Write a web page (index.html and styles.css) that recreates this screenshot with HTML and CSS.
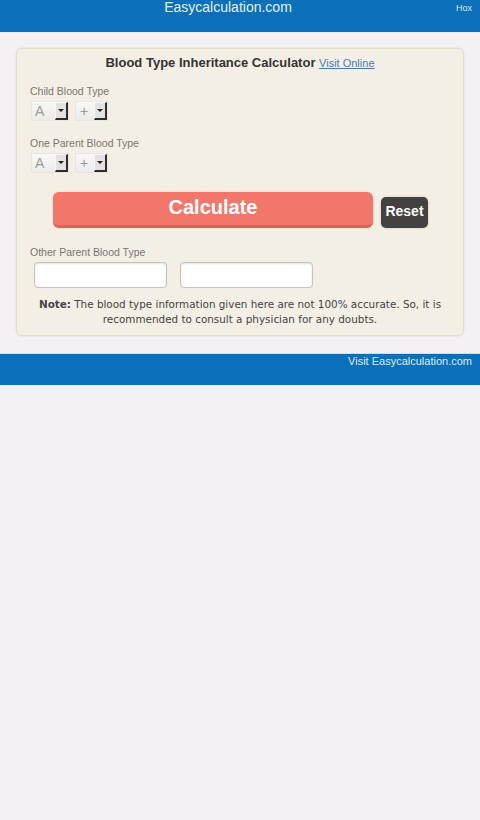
FILE: index.html
```html
<!DOCTYPE html>
<html>
<head>
<meta charset="utf-8">
<link rel="stylesheet" href="styles.css">
</head>
<body>
<header class="topbar">
  <span class="brand">Easycalculation.com</span>
  <span class="hox">Hox</span>
</header>
<main class="wrap">
  <section class="card">
    <h1 class="title">Blood Type Inheritance Calculator <a class="visit" href="#">Visit Online</a></h1>
    <div class="field">
      <div class="label">Child Blood Type</div>
      <div class="selects">
        <div class="sel sel-a"><span class="val">A</span><span class="arrow"><i></i></span></div>
        <div class="sel sel-b"><span class="val">+</span><span class="arrow"><i></i></span></div>
      </div>
    </div>
    <div class="field">
      <div class="label">One Parent Blood Type</div>
      <div class="selects">
        <div class="sel sel-a"><span class="val">A</span><span class="arrow"><i></i></span></div>
        <div class="sel sel-b"><span class="val">+</span><span class="arrow"><i></i></span></div>
      </div>
    </div>
    <div class="buttons">
      <button class="calc">Calculate</button>
      <button class="reset">Reset</button>
    </div>
    <div class="label other">Other Parent Blood Type</div>
    <div class="inputs">
      <input class="txt" type="text">
      <input class="txt" type="text">
    </div>
    <p class="note"><b>Note:</b> The blood type information given here are not 100% accurate. So, it is recommended to consult a physician for any doubts.</p>
  </section>
</main>
<footer class="footbar">
  <a class="footlink" href="#">Visit Easycalculation.com</a>
</footer>
</body>
</html>
```
FILE: styles.css
```css
html, body {
  margin: 0;
  padding: 0;
  background: #f3f1f3;
  font-family: "Liberation Sans", Arial, sans-serif;
}
.topbar {
  height: 32px;
  background: #0b6fba;
  border-bottom: 1px solid #dff0fb;
  position: relative;
  display: flex;
  justify-content: center;
}
.brand {
  color: #e6f2fb;
  font-size: 14px;
  line-height: 15px;
  padding-top: 0;
  margin-left: -24px;
}
.hox {
  position: absolute;
  right: 8px;
  top: 3px;
  color: #d9ecf9;
  font-size: 9px;
}
.wrap {
  padding: 15px 16px 17px 16px;
}
.card {
  background: #f4efe4;
  border: 1px solid #e3dccb;
  border-radius: 6px;
  box-shadow: 0 0 2px rgba(0,0,0,0.12);
  padding: 6px 13px 9px 13px;
  height: 288px;
  box-sizing: border-box;
}
.title {
  margin: 0;
  text-align: center;
  font-size: 13px;
  font-weight: bold;
  color: #333;
  line-height: 16px;
}
.visit {
  font-size: 11px;
  font-weight: normal;
  color: #4a7ab8;
  text-decoration: underline;
}
.field {
  margin-top: 14px;
}
.field + .field {
  margin-top: 16px;
}
.label {
  font-size: 10.5px;
  color: #7a7670;
  line-height: 13px;
}
.selects {
  display: flex;
  gap: 6px;
  margin-top: 3px;
  padding-left: 1px;
}
.sel {
  height: 20px;
  background: linear-gradient(#f8f8f6, #ecebea);
  border: 1px solid #e7e5e0;
  display: flex;
  align-items: stretch;
  box-sizing: border-box;
}
.sel-a { width: 38px; }
.sel-b { width: 33px; }
.val {
  flex: 1;
  font-size: 14px;
  color: #9a9a9a;
  padding-left: 3px;
  line-height: 18px;
}
.sel-b .val { padding-left: 4px; }
.arrow {
  width: 13px;
  background: #e4e2de;
  border-right: 2px solid #2d2d2d;
  border-bottom: 2px solid #2d2d2d;
  border-top: 1px solid #f7f7f7;
  border-left: 1px solid #f7f7f7;
  box-sizing: border-box;
  display: flex;
  align-items: center;
  justify-content: center;
}
.arrow i {
  width: 0;
  height: 0;
  border-left: 3px solid transparent;
  border-right: 3px solid transparent;
  border-top: 3px solid #222;
}
.buttons {
  display: flex;
  align-items: flex-start;
  margin-top: 19px;
  padding-left: 23px;
  gap: 8px;
}
.calc {
  width: 320px;
  height: 36px;
  background: #f2776a;
  border: none;
  border-bottom: 3px solid #db6359;
  border-radius: 6px;
  color: #fff;
  font-family: "Liberation Sans", Arial, sans-serif;
  font-size: 20px;
  font-weight: bold;
  padding: 0 0 2px 0;
  box-shadow: 0 0 2px rgba(240,120,100,0.3);
}
.reset {
  margin-top: 5px;
  width: 47px;
  height: 31px;
  background: #444240;
  border: none;
  border-radius: 5px;
  color: #fff;
  font-family: "Liberation Sans", Arial, sans-serif;
  font-size: 14px;
  font-weight: bold;
  padding: 0 0 3px 0;
  box-shadow: 0 0 2px rgba(0,0,0,0.25);
}
.other {
  margin-top: 18px;
}
.inputs {
  display: flex;
  gap: 13px;
  margin-top: 3px;
  padding-left: 4px;
}
.txt {
  width: 133px;
  height: 26px;
  box-sizing: border-box;
  background: #fff;
  border: 1px solid #c9c3bd;
  border-radius: 4px;
  box-shadow: inset 0 1px 2px rgba(0,0,0,0.12), 0 0 1px rgba(0,0,0,0.1);
  margin: 0;
}
.note {
  margin: 9px 0 0 0;
  text-align: center;
  font-family: "DejaVu Sans", Verdana, sans-serif;
  font-size: 10.4px;
  line-height: 15px;
  color: #444;
}
.footbar {
  margin-top: 0;
  height: 31px;
  background: #0b6fba;
  border-top: 1px solid #bfe2f7;
  border-bottom: 1px solid #dff0fb;
  text-align: right;
  padding-right: 8px;
  font-size: 11px;
  line-height: 13px;
}
.footlink {
  display: block;
  color: #dcedf9;
  font-size: 11px;
  line-height: 13px;
  text-decoration: none;
  padding-top: 1px;
}
```
